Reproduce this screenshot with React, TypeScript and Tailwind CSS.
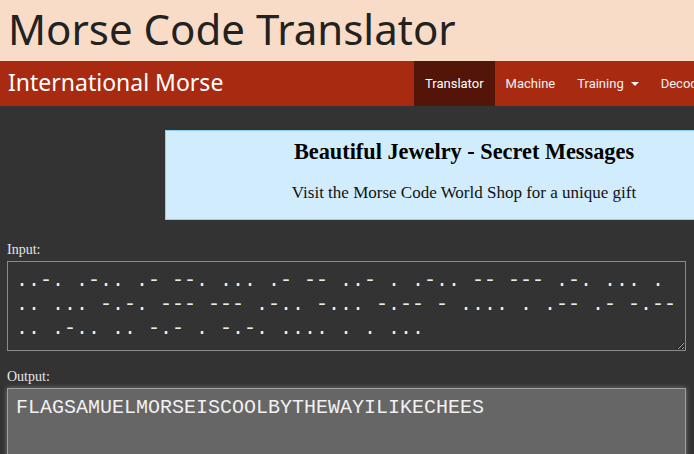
import React from 'react';

const morse = [
  '..-. .-.. .- --. ... .- -- ..- . .-.. -- --- .-. ... .',
  '.. ... -.-. --- --- .-.. -... -.-- - .... . .-- .- -.--',
  '.. .-.. .. -.- . -.-. .... . . ...',
].join('\n');

const navItems = ['Translator', 'Machine', 'Training', 'Decoder'];

export default function App() {
  return (
    <div className="w-[694px] h-[454px] overflow-hidden bg-[#333333]">
      <header className="h-[61px] bg-[#f9dcc8] pl-[8px]">
        <h1 className="text-[42px] leading-[57px] text-[#222222] font-['Noto_Sans',sans-serif] whitespace-nowrap">
          Morse Code Translator
        </h1>
      </header>

      <nav className="h-[45px] bg-[#a82b11] flex whitespace-nowrap">
        <div className="pl-[8px] w-[414px] shrink-0 text-[23px] leading-[42px] text-white font-['Noto_Sans',sans-serif]">
          International Morse
        </div>
        <ul className="flex font-['Roboto',sans-serif] text-[13px] leading-[45px] text-[#f2f2f2]">
          {navItems.map(item => (
            <li
              key={item}
              className={`px-[11px] flex items-center shrink-0 ${item === 'Translator' ? 'bg-[#521508] text-white' : ''}`}
            >
              {item}
              {item === 'Training' && (
                <span className="ml-[7px] mt-[1px] w-0 h-0 border-l-[4px] border-r-[4px] border-t-[4px] border-l-transparent border-r-transparent border-t-[#f2f2f2]" />
              )}
            </li>
          ))}
        </ul>
      </nav>

      <main className="pt-[24px]">
        <div className="ml-[165px] w-[598px] h-[90px] border border-[#8ccdf0] bg-[#d1ecfd] text-center font-['Liberation_Serif',serif] text-black">
          <div className="pt-[8px] text-[22.3px] leading-[25px] font-bold">Beautiful Jewelry - Secret Messages</div>
          <div className="mt-[19px] text-[17px] leading-[19px] text-[#111111]">Visit the Morse Code World Shop for a unique gift</div>
        </div>

        <div className="px-[7px] mt-[22px] font-['Liberation_Serif',serif]">
          <label className="block text-[14px] leading-[16px] text-[#e8e8e8]">Input:</label>
          <textarea
            readOnly
            value={morse}
            className="mt-[3px] block w-[679px] h-[90px] border border-[#8a8a8a] bg-[#333333] pt-[7px] pl-[8px] pr-[4px] font-['Liberation_Mono',monospace] text-[20px] leading-[24px] text-[#eeeeee] outline-none resize"
          />

          <label className="block mt-[18px] text-[14px] leading-[16px] text-[#e8e8e8]">Output:</label>
          <div className="mt-[3px] w-[679px] h-[90px] border border-[#a0a0a0] bg-[#666666] shadow-[0_0_5px_rgba(255,255,255,0.35)] pt-[7px] px-[8px] font-['Liberation_Mono',monospace] text-[20px] leading-[24px] text-[#f0f0f0]">
            FLAGSAMUELMORSEISCOOLBYTHEWAYILIKECHEES
          </div>
        </div>
      </main>
    </div>
  );
}
